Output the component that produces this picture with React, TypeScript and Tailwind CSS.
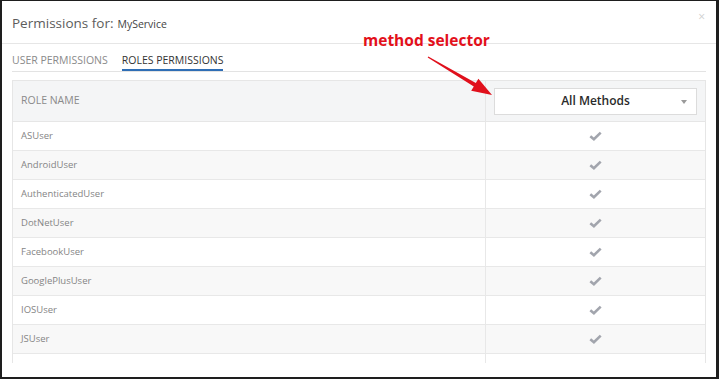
import React from "react";

// roles listed in the permissions table
const roles: string[] = [
  "ASUser",
  "AndroidUser",
  "AuthenticatedUser",
  "DotNetUser",
  "FacebookUser",
  "GooglePlusUser",
  "IOSUser",
  "JSUser",
  "WindowsPhoneUser",
];

const Check = () => (
  <svg width="13" height="10" viewBox="0 0 13 10">
    <path d="M1.3 5.2 L4.9 8.2 L11.7 1.6" fill="none" stroke="#a2a5ad" strokeWidth="2.6" />
  </svg>
);

const App = () => {
  return (
    <div
      className="relative h-[379px] w-[719px] overflow-hidden border-t border-r-[3px] border-b-[2px] border-l-2 border-[#1e1e1e] bg-white"
      style={{ fontFamily: "'Open Sans', 'Liberation Sans', sans-serif" }}
    >
      {/* header */}
      <div className="flex h-[43px] items-start justify-between border-b border-[#e6e6e6] pl-[10px] pr-[11px]">
        <div className="mt-[13px] flex items-baseline gap-[4px]">
          <span className="text-[13.5px] leading-[18px] text-[#5c5c5c]">Permissions for:</span>
          <span className="text-[10.5px] leading-[18px] text-[#444]">MyService</span>
        </div>
        <span className="mt-[9px] text-[12px] leading-[14px] text-[#cfcfcf]">×</span>
      </div>

      {/* tabs */}
      <div className="mx-[10px] flex h-[28px] items-end gap-[14px] border-b border-[#e3e3e3]">
        <div className="pb-[4px] text-[10.5px] leading-[14px] text-[#8a8a8a]">USER PERMISSIONS</div>
        <div className="border-b-2 border-[#2f6eb5] pb-[2px] text-[10.5px] leading-[14px] text-[#333]">
          ROLES PERMISSIONS
        </div>
      </div>

      {/* table */}
      <div className="mx-[10px] mt-[8px] border-x border-t border-[#e6e6e6]">
        <div className="flex h-[41px] border-b border-[#e6e6e6] bg-[#f4f5f6]">
          <div className="flex w-[473px] items-center border-r border-[#e6e6e6] pl-[8px] text-[10.5px] text-[#8a8a8a]">
            ROLE NAME
          </div>
          <div className="flex flex-1 items-center px-[8px]">
            <div className="relative flex h-[27px] w-full items-center justify-center border border-[#dcdcdc] bg-white text-[12px] font-semibold text-[#2a2a2a]">
              All Methods
              <span className="absolute right-[9px] top-[11px] h-0 w-0 border-x-[3.5px] border-t-[4px] border-x-transparent border-t-[#9a9a9a]" />
            </div>
          </div>
        </div>
        <div className="h-[241px] overflow-hidden">
          {roles.map((role, i) => (
            <div
              key={role}
              className={`flex h-[29px] border-b border-[#e8e8e8] ${i % 2 === 1 ? "bg-[#f8f8f8]" : "bg-white"}`}
            >
              <div className="flex w-[473px] items-center border-r border-[#e8e8e8] pl-[8px] text-[9.5px] text-[#858585]">
                {role}
              </div>
              <div className="flex flex-1 items-center justify-center">
                <Check />
              </div>
            </div>
          ))}
        </div>
      </div>

      {/* annotation */}
      <div className="absolute left-[361px] top-[29px] text-[15.5px] font-bold leading-[20px] text-[#e3101b]">
        method selector
      </div>
      <svg className="absolute left-0 top-0" width="719" height="379">
        <polygon
          points="426.3,55.6 473.8,82.1 476.4,77.8 490,94 469.2,89.8 471.8,85.5 425.7,56.4"
          fill="#e0101c"
        />
      </svg>
    </div>
  );
};

export default App;
